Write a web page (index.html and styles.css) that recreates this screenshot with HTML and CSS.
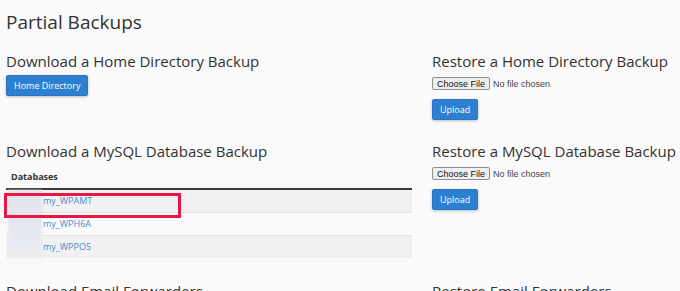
FILE: index.html
```html
<!DOCTYPE html>
<html lang="en">
<head>
    <meta charset="UTF-8">
    <meta name="viewport" content="width=device-width, initial-scale=1.0">
    <title>Partial Backups</title>
    <link rel="stylesheet" href="styles.css">
</head>
<body>
    <div class="page">
        <h1>Partial Backups</h1>

        <div class="section">
            <div class="col">
                <h2>Download a Home Directory Backup</h2>
                <button class="btn">Home Directory</button>
            </div>
            <div class="col">
                <h2>Restore a Home Directory Backup</h2>
                <input type="file" class="file">
                <button class="btn upload">Upload</button>
            </div>
        </div>

        <div class="section">
            <div class="col">
                <h2>Download a MySQL Database Backup</h2>
                <div class="table-wrap">
                    <table class="db-table">
                        <thead>
                            <tr><th>Databases</th></tr>
                        </thead>
                        <tbody>
                            <tr class="odd"><td><a href="#">my_WPAMT</a></td></tr>
                            <tr><td><a href="#">my_WPH6A</a></td></tr>
                            <tr class="odd"><td><a href="#">my_WPPOS</a></td></tr>
                        </tbody>
                    </table>
                    <div class="redact"></div>
                    <div class="highlight"></div>
                </div>
            </div>
            <div class="col">
                <h2>Restore a MySQL Database Backup</h2>
                <input type="file" class="file">
                <button class="btn upload">Upload</button>
            </div>
        </div>

        <div class="section">
            <div class="col">
                <h2>Download Email Forwarders</h2>
            </div>
            <div class="col">
                <h2>Restore Email Forwarders</h2>
            </div>
        </div>
    </div>
</body>
</html>
```

FILE: styles.css
```css
body {
    margin: 0;
    padding: 0;
    background: #fafafa;
    color: #333;
    font-family: "Open Sans", sans-serif;
    overflow: hidden;
}

.page {
    padding: 0 6px;
}

h1 {
    font-size: 19px;
    line-height: 26px;
    font-weight: 400;
    margin: 9px 0 15px 0;
}

h2 {
    font-size: 15px;
    line-height: 22px;
    font-weight: 400;
    margin: 0;
    white-space: nowrap;
}

.section {
    display: grid;
    grid-template-columns: 406px 1fr;
    column-gap: 20px;
    margin-bottom: 20px;
}

.col {
    display: flex;
    flex-direction: column;
    align-items: flex-start;
}

.btn {
    font-family: "Open Sans", sans-serif;
    font-size: 9px;
    line-height: 13px;
    color: #fff;
    background: #2d7fd2;
    border: 1px solid #2a74c0;
    border-radius: 2px;
    padding: 3px 7px;
    height: 21px;
    margin-top: 3px;
    box-shadow: 0 1px 3px rgba(0, 0, 0, 0.25);
    cursor: pointer;
}

.upload {
    margin-top: 9px;
}

.file {
    font-family: "Liberation Sans", Arial, sans-serif;
    font-size: 9px;
    color: #444;
    margin-top: 5px;
    height: 13px;
    line-height: 13px;
}

.file::file-selector-button {
    font-family: "Liberation Sans", Arial, sans-serif;
    font-size: 9px;
    height: 13px;
    padding: 0 4px;
    margin-right: 3px;
    border: 1px solid #8f8f8f;
    border-radius: 2px;
    background: #efefef;
    color: #111;
}

.table-wrap {
    position: relative;
    width: 406px;
    margin-bottom: 2px;
}

.db-table {
    width: 100%;
    border-collapse: collapse;
    font-size: 9px;
    line-height: 13px;
}

.db-table th {
    text-align: left;
    font-weight: 700;
    padding: 8px 5px 5px 5px;
    border-bottom: 2px solid #3a3a3a;
}

.db-table td {
    padding: 4px 5px 5px 37px;
    border-top: 1px solid #e4e4e4;
}

.db-table tbody tr:first-child td {
    border-top: none;
}

.db-table tr.odd td {
    background: #f1f1f1;
}

.db-table a {
    color: #4a8ad3;
    text-decoration: none;
}

.redact {
    position: absolute;
    left: 2px;
    top: 28px;
    width: 34px;
    height: 75px;
    background: linear-gradient(#e1e5ec, #e6e9ef 70%, rgba(236, 238, 242, 0));
    filter: blur(1px);
}

.highlight {
    position: absolute;
    left: -2px;
    top: 31px;
    width: 171px;
    height: 19px;
    border: 3px solid #eb1445;
}
```
